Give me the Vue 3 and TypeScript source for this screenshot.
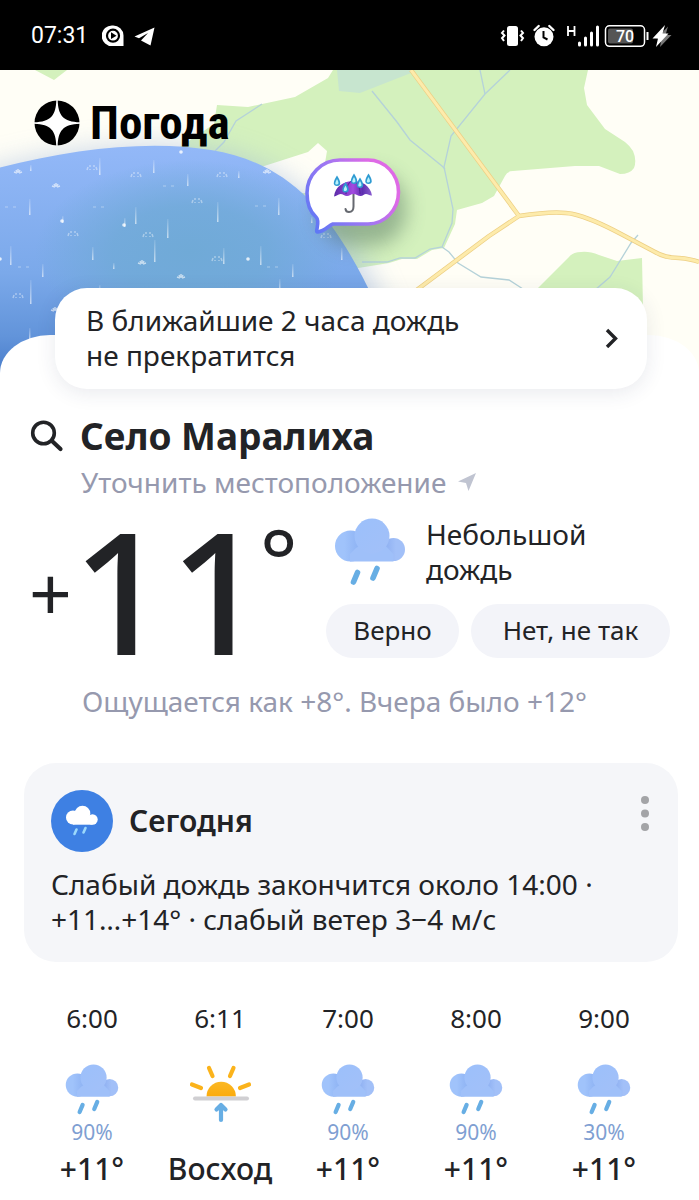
<script setup lang="ts">
interface Hour {
  time: string
  kind: 'rain' | 'sunrise'
  chance?: string
  value: string
}

const hours: Hour[] = [
  { time: '6:00', kind: 'rain', chance: '90%', value: '+11°' },
  { time: '6:11', kind: 'sunrise', value: 'Восход' },
  { time: '7:00', kind: 'rain', chance: '90%', value: '+11°' },
  { time: '8:00', kind: 'rain', chance: '90%', value: '+11°' },
  { time: '9:00', kind: 'rain', chance: '30%', value: '+11°' },
]

// Falling drops on the precipitation layer: x, y, length
const streaks: [number, number, number][] = [
  [30, 95, 6], [99, 88, 17], [153, 90, 13], [187, 104, 12], [238, 101, 7], [29, 129, 16],
  [135, 137, 17], [217, 132, 20], [278, 128, 17], [62, 146, 7], [124, 148, 9], [167, 149, 19],
  [10, 176, 19], [92, 177, 13], [154, 170, 22], [223, 178, 16], [260, 176, 19], [341, 178, 12],
  [42, 194, 13], [113, 193, 6], [292, 194, 13], [30, 210, 24], [279, 209, 12], [99, 215, 8],
  [29, 258, 12], [311, 147, 6],
]
// Splash rings: x, y
const rings: [number, number][] = [
  [92, 97], [136, 104], [222, 104], [197, 130], [73, 163], [148, 164], [217, 188], [18, 225], [326, 165],
]
// Bright splashes: x, y
const stars: [number, number][] = [
  [18, 102], [56, 116], [267, 102], [142, 193], [181, 207], [55, 240],
]
// Points where a drop has just landed: x, y
const dots: [number, number][] = [
  [181, 82], [248, 189], [0, 189], [62, 151], [124, 155],
]
// Fading splashes: x, y
const faint: [number, number][] = [
  [168, 116], [10, 137], [98, 137], [260, 136], [23, 197], [272, 197],
]
// Raindrops over the umbrella: x, y
const drops: [number, number][] = [
  [337, 111], [354, 109], [345.5, 117.5], [360, 113], [368.5, 109],
]
</script>

<template>
  <div class="page">
    <svg class="defs" width="0" height="0" aria-hidden="true">
      <defs>
        <linearGradient id="cloudFill" x1="0" y1="0" x2="1" y2="1">
          <stop offset="0" stop-color="#9cc0fb" />
          <stop offset="1" stop-color="#a2c0f8" />
        </linearGradient>
        <linearGradient id="cloudLeft" x1="0" y1="0" x2="1" y2="0">
          <stop offset="0.3" stop-color="#a0c3fb" />
          <stop offset="1" stop-color="#86abf0" />
        </linearGradient>
        <linearGradient id="cloudRight" x1="0" y1="0" x2="1" y2="0">
          <stop offset="0" stop-color="#88abf0" />
          <stop offset="0.6" stop-color="#a2c0f8" />
        </linearGradient>
        <linearGradient id="sunFill" x1="0" y1="0" x2="0" y2="1">
          <stop offset="0" stop-color="#fbb824" />
          <stop offset="1" stop-color="#fbab0c" />
        </linearGradient>
        <symbol id="rainCloud" viewBox="0 0 72 68">
          <circle cx="16.500" cy="28" r="15.500" fill="url(#cloudLeft)" />
          <circle cx="59.500" cy="31.500" r="11.500" fill="url(#cloudRight)" />
          <path d="M16 43.500h43.500V36L50 26 38 20 22 30l-6 6z" fill="#9fc0f9" />
          <circle cx="38" cy="18" r="17.500" fill="url(#cloudFill)" />
          <path d="M23.500 54.500l-4 9.500M43 50.500l-4 9.500" stroke="#67aee4" stroke-width="5.600" stroke-linecap="round" />
        </symbol>
      </defs>
    </svg>

    <header class="status">
      <span class="clock">07:31</span>
      <svg class="status-left" width="54" height="24" viewBox="0 0 54 24" aria-hidden="true">
        <path d="M11 1.500A10.300 10.300 0 1 0 11 22h10.500V11.500A10.300 10.300 0 0 0 11 1.500z" fill="#fff" />
        <circle cx="11" cy="11.700" r="6" fill="none" stroke="#000" stroke-width="2.200" />
        <path d="M9 8.300l5.500 3.400L9 15.100z" fill="#000" />
        <path d="M52.500 3.500L32.500 12.500l4.500 1.800 9-5.300-7 7.500 9.500 5z" fill="#fff" />
      </svg>
      <svg class="status-right" width="172" height="30" viewBox="0 0 172 30" aria-hidden="true">
        <rect x="7" y="5" width="11" height="20" rx="2.500" fill="#fff" />
        <path d="M4 9.500L2 12l2.500 2.500-2.500 2.700 2 2.800M21 9.500l2 2.500-2.500 2.500 2.500 2.700-2 2.800" fill="none" stroke="#fff" stroke-width="2" />
        <circle cx="44" cy="15.800" r="9.500" fill="#fff" />
        <path d="M34.500 9l4.200-4M53.500 9l-4.200-4" stroke="#fff" stroke-width="2.400" stroke-linecap="round" />
        <path d="M43.500 10v6.500l4 2" fill="none" stroke="#000" stroke-width="2" />
        <path d="M68 5v10M74.500 5v10M68 10h6.500" stroke="#fff" stroke-width="1.800" />
        <path d="M79.500 22v2M85.500 17v7M91.500 12v12M97.500 6v18" stroke="#fff" stroke-width="3" stroke-linecap="round" />
        <rect x="105.500" y="4.800" width="39" height="20.500" rx="4" fill="none" stroke="#fff" stroke-width="1.500" />
        <rect x="108" y="7.500" width="25" height="15" rx="2" fill="#555" />
        <path d="M147.500 11v8" stroke="#fff" stroke-width="2" />
        <text x="125" y="20.500" class="battery">70</text>
        <path d="M168 5.500l-11.500 12h5L160 26l11.500-12h-6z" fill="#777" />
        <path d="M165 4l-12.500 13.500h5.500L156 26l12.500-13.500h-6z" fill="#fff" />
      </svg>
    </header>

    <section class="hero" aria-label="Карта осадков">
      <svg class="map" viewBox="0 0 699 320" preserveAspectRatio="xMinYMin slice" aria-hidden="true">
        <defs>
          <linearGradient id="rainFill" x1="0" y1="0" x2="0" y2="1">
            <stop offset="0" stop-color="#93b8f8" />
            <stop offset="0.5" stop-color="#7ba9ea" />
            <stop offset="0.75" stop-color="#6294da" />
            <stop offset="0.92" stop-color="#4478c8" />
          </linearGradient>
          <radialGradient id="rainCore">
            <stop offset="0" stop-color="#70aad7" />
            <stop offset="0.5" stop-color="#70aad7" stop-opacity="0.8" />
            <stop offset="1" stop-color="#70aad7" stop-opacity="0" />
          </radialGradient>
          <linearGradient id="bubbleStroke" x1="0" y1="0.800" x2="1" y2="0.250">
            <stop offset="0" stop-color="#5f78f5" />
            <stop offset="0.5" stop-color="#a276f2" />
            <stop offset="0.850" stop-color="#de6ae6" />
          </linearGradient>
          <linearGradient id="umbrella" x1="0" y1="0" x2="1" y2="0">
            <stop offset="0" stop-color="#5b2ba8" />
            <stop offset="0.5" stop-color="#a34ae0" />
            <stop offset="0.750" stop-color="#5d2fb0" />
            <stop offset="1" stop-color="#8b5ed0" />
          </linearGradient>
          <linearGradient id="streak" x1="0" y1="0" x2="0" y2="1">
            <stop offset="0" stop-color="#fff" stop-opacity="0.1" />
            <stop offset="1" stop-color="#fff" stop-opacity="0.6" />
          </linearGradient>
          <filter id="haze" x="-20%" y="-30%" width="140%" height="160%"><feGaussianBlur stdDeviation="14" /></filter>
          <filter id="soft" x="-50%" y="-50%" width="200%" height="200%"><feGaussianBlur stdDeviation="10" /></filter>
        </defs>

        <rect width="699" height="320" fill="#fffef6" />
        <g fill="#d4f1bd">
          <path d="M35 0h32L54 10z" />
          <path d="M333 0l-5 8-33 19-47 10-31-2-3 19-34 23v60l160 64 49-8 13-4 15 0 15-9 12-2 11-24 2-14 25-7 12-7 11-20q2-5 8-5l62-5 24 0 21 8q10 0 14-6 3-8-1-17-4-6-8-9l-20-13-18-24-3-17 4-18z" />
          <path d="M535 221l34-34q4-5 12-5 8-1 18 3l18 6 25-3 1 50H535z" />
        </g>
        <path d="M258 98l50-16 10-9 9 8-2 12-8 30-30 0z" fill="#fffef6" />
        <path d="M337 0l2 21 21 2 51-20V0z" fill="#c7e5cf" />
        <g fill="none" stroke="#b5d2d9" stroke-width="1.300">
          <path d="M262 34l-26 17-12 21-9 9" />
          <path d="M372 21l25 31 13 18 32 26 3 3" />
          <path d="M510 0l-25 24-34 42-7 31 9 42-1 14-10 24-12 2-15 9-15 0-13 4H362" />
          <path d="M480 0l5 24" />
          <path d="M442 177l7 5 9 11 23 14 28 3 14 9" />
          <path d="M638 165l-7 8-21 34-15 13" />
        </g>
        <g fill="none" stroke-linejoin="round">
          <path d="M411 0l108 146M414 222l75-56 30-20q38-6 54-2 18 4 48 20l34 18q10 6 24 6 12 1 20 4" stroke="#edcf84" stroke-width="4.500" />
          <path d="M411 0l108 146M414 222l75-56 30-20q38-6 54-2 18 4 48 20l34 18q10 6 24 6 12 1 20 4" stroke="#fdebab" stroke-width="3" />
        </g>

        <path d="M-20 103C60 80 145 69 211 80 320 102 370 190 395 270V330H-20z" fill="#9db5dc" opacity="0.55" filter="url(#haze)" />
        <path d="M-20 103C60 80 145 69 211 80 310 96 352 173 400 290V330H-20z" fill="url(#rainFill)" />
        <ellipse cx="190" cy="182" rx="155" ry="92" fill="url(#rainCore)" />
        <rect v-for="([x, y, l], i) in streaks" :key="'s' + i" :x="x" :y="y" width="1.500" :height="l" fill="url(#streak)" />
        <path
          v-for="([x, y], i) in rings" :key="'r' + i" class="ring"
          :d="`M${x - 5} ${y + 3}l1-3M${x - 3} ${y - 1}h2M${x + 5} ${y + 3}l-1-3M${x + 3} ${y - 1}h-2M${x - 2} ${y + 2}v1M${x + 2} ${y + 2}v1`"
        />
        <path
          v-for="([x, y], i) in stars" :key="'b' + i" class="star"
          :d="`M${x - 4} ${y}l3 1M${x + 4} ${y}l-3 1M${x} ${y - 3}v4M${x - 2} ${y - 2}l1 2M${x + 2} ${y - 2}l-1 2`"
        />
        <circle v-for="([x, y], i) in dots" :key="'o' + i" class="dot" :cx="x" :cy="y" r="1.800" />
        <path v-for="([x, y], i) in faint" :key="'f' + i" class="faint" :d="`M${x - 5} ${y}h3M${x + 3} ${y}h3`" />

        <rect x="318" y="102" width="88" height="74" rx="34" fill="#486b58" opacity="0.45" filter="url(#soft)" />
        <path d="M340 90H368A30.500 32 0 0 1 368 154H333C328 156 325 161 318 162 314 163 321 152 316 147 308 140 307 131 307 123A33 33 0 0 1 340 90Z" fill="#fff" stroke="url(#bubbleStroke)" stroke-width="3.600" />
        <path d="M353.500 120v16.500q0 5.500-4.500 5.500-3 0-3.500-3" fill="none" stroke="#666970" stroke-width="2" stroke-linecap="round" />
        <path d="M334 126.500c2-20 35-21 38-1-2 .5-4-1.500-6-1.500s-3 2-5.500 2-4.500-2-7-2-4 2-6.500 2-4-2-6.500-2-4 2.500-6.500 2.500z" fill="url(#umbrella)" />
        <path d="M346 124c0-6 2-11 6-13.500M360 124c0-6-2-11-6-13.500" fill="none" stroke="#4a2393" stroke-width="1" />
        <g v-for="([x, y], i) in drops" :key="'d' + i">
          <path :d="`M${x} ${y - 5.5}q-6.500 10 0 10.500q6.500-.5 0-10.500z`" fill="#2f9bd2" />
          <path :d="`M${x} ${y - 2}q-3.500 6 0 5.500q3-.5 0-5.500z`" fill="#b9f2fb" />
        </g>
      </svg>
      <div class="brand">
        <svg width="46" height="46" viewBox="0 0 46 46" aria-hidden="true">
          <circle cx="23" cy="23" r="22.500" fill="#000" />
          <path d="M22.300 0h1.400C24 15 29 22 46 22.300v1.400C29 24 24 31 23.700 46h-1.400C22 31 17 24 0 23.700v-1.400C17 22 22 15 22.300 0z" fill="#fff" />
        </svg>
        <span class="brand-name">Погода</span>
      </div>
    </section>

    <main class="sheet">
      <a class="alert" href="#nowcast">
        <span>В ближайшие 2 часа дождь<br />не прекратится</span>
        <svg width="14" height="20" viewBox="0 0 14 20" aria-hidden="true">
          <path d="M2 2l8.500 8.500L2 19" fill="none" stroke="#222326" stroke-width="3.400" />
        </svg>
      </a>

      <div class="place">
        <button class="icon-button" type="button" aria-label="Поиск">
          <svg width="34" height="34" viewBox="0 0 34 34" aria-hidden="true">
            <circle cx="13.500" cy="14" r="10.800" fill="none" stroke="#222326" stroke-width="3.600" />
            <path d="M22 22l8.500 8" stroke="#222326" stroke-width="4.200" stroke-linecap="round" />
          </svg>
        </button>
        <h1>Село Маралиха</h1>
      </div>
      <button class="locate" type="button">
        <span>Уточнить местоположение</span>
        <svg width="18" height="18" viewBox="0 0 18 18" aria-hidden="true">
          <path d="M18 0L0 8.500l8 1.500 2.500 8z" fill="#c0c4d1" />
        </svg>
      </button>

      <section class="now">
        <div class="temp">
          <span class="sign">+</span><span class="digits">11</span><span class="degree">°</span>
        </div>
        <div class="details">
          <div class="condition">
            <svg width="72" height="68" aria-hidden="true"><use href="#rainCloud" /></svg>
            <p>Небольшой<br />дождь</p>
          </div>
          <div class="answers">
            <button class="pill yes" type="button">Верно</button>
            <button class="pill no" type="button">Нет, не так</button>
          </div>
        </div>
      </section>
      <p class="feels">Ощущается как +8°. Вчера было +12°</p>

      <section class="today">
        <div class="today-head">
          <svg width="62" height="62" viewBox="0 0 62 62" aria-hidden="true">
            <circle cx="31" cy="31" r="31" fill="#3e80e3" />
            <g fill="#fff">
              <circle cx="22" cy="27.500" r="7" />
              <circle cx="31.500" cy="23.500" r="7.800" />
              <circle cx="41.500" cy="29.500" r="5.200" />
              <path d="M22 26h19.500v8.700H22z" />
            </g>
            <path d="M25.500 39.500l-2 4.500M34.500 38l-2 4.500" stroke="#9bd8fb" stroke-width="2.600" stroke-linecap="round" />
          </svg>
          <h2>Сегодня</h2>
          <button class="icon-button menu" type="button" aria-label="Ещё">
            <svg width="10" height="38" viewBox="0 0 10 38" aria-hidden="true">
              <g fill="#a3a4a7"><circle cx="5" cy="5" r="4" /><circle cx="5" cy="18.500" r="4" /><circle cx="5" cy="32" r="4" /></g>
            </svg>
          </button>
        </div>
        <p>Слабый дождь закончится около 14:00 ·<br />+11…+14° · слабый ветер 3−4 м/с</p>
      </section>

      <ul class="hours">
        <li v-for="hour in hours" :key="hour.time">
          <time>{{ hour.time }}</time>
          <svg v-if="hour.kind === 'rain'" class="rain" width="54" height="51" aria-hidden="true">
            <use href="#rainCloud" />
          </svg>
          <svg v-else class="sunrise" width="64" height="60" viewBox="0 0 64 60" aria-hidden="true">
            <path d="M18.500 33.500a14.700 14.700 0 0 1 29.400 0z" fill="url(#sunFill)" />
            <path d="M21 5l3.500 8M45.500 5L42 13M4 21.500l9 3.500M61 21.500L52 25" stroke="#fbb31b" stroke-width="4.200" stroke-linecap="round" />
            <path d="M7 35.500h52" stroke="#d0cfd2" stroke-width="4" stroke-linecap="round" />
            <path d="M33 42V57M28.500 46.500L33 42l4.500 4.500" fill="none" stroke="#67aee4" stroke-width="4.200" stroke-linecap="round" stroke-linejoin="round" />
          </svg>
          <span v-if="hour.chance" class="chance">{{ hour.chance }}</span>
          <strong>{{ hour.value }}</strong>
        </li>
      </ul>
    </main>
  </div>
</template>

<style>
body {
  margin: 0;
  background: #fff;
}
</style>

<style scoped>
.page {
  font-family: "Noto Sans", "Open Sans", sans-serif;
  font-size: 28px;
  line-height: 35px;
  color: #222326;
  background: #fff;
}
.defs {
  display: block;
}
h1, h2, p, ul {
  margin: 0;
  padding: 0;
}
button {
  font: inherit;
  color: inherit;
  border: 0;
  padding: 0;
  background: none;
  cursor: pointer;
}
svg {
  flex: none;
}
.status {
  display: flex;
  align-items: center;
  box-sizing: border-box;
  height: 70px;
  padding: 2px 27px 0 31px;
  background: #000;
}
.clock {
  font: 23px/24px Roboto, sans-serif;
  color: #fff;
}
.status-left {
  margin-left: 14px;
}
.status-right {
  margin-left: auto;
}
.battery {
  font: 500 16px Roboto, sans-serif;
  fill: #fff;
  text-anchor: middle;
}
.hero {
  position: relative;
  height: 320px;
  overflow: hidden;
}
.map {
  display: block;
  width: 100%;
  height: 100%;
}
.ring {
  fill: none;
  stroke: #fff;
  stroke-opacity: 0.4;
  stroke-width: 1.5;
}
.star {
  fill: none;
  stroke: #fff;
  stroke-width: 1.5;
  stroke-opacity: 0.6;
}
.dot {
  fill: #fff;
  opacity: 0.8;
}
.faint {
  stroke: #fff;
  stroke-opacity: 0.25;
  stroke-width: 1.5;
}
.brand {
  position: absolute;
  left: 34px;
  top: 30px;
  display: flex;
  align-items: center;
  gap: 10px;
  color: #000;
}
.brand-name {
  font: bold 47px/46px "Roboto Condensed", "Liberation Sans Narrow", Roboto, sans-serif;
}
.sheet {
  position: relative;
  margin-top: -55px;
  padding-bottom: 12px;
  border-radius: 50px 50px 0 0 / 38px 38px 0 0;
  background: #fff;
  display: flow-root;
}
.alert {
  display: flex;
  align-items: center;
  justify-content: space-between;
  margin: -47px 52px 0 55px;
  padding: 15px 28px 16px 31px;
  border-radius: 32px;
  background: #fff;
  box-shadow: 0 4px 20px rgba(40, 50, 90, 0.1);
  color: inherit;
  text-decoration: none;
}
.place {
  display: flex;
  align-items: center;
  gap: 16px;
  margin: 25px 30px 0;
}
.icon-button {
  display: flex;
}
h1 {
  font-size: 37px;
  line-height: 44px;
  font-weight: 700;
}
.locate {
  display: flex;
  align-items: center;
  gap: 12px;
  margin: 6px 0 0 81px;
  line-height: 36px;
  color: #9699ae;
}
.now {
  display: flex;
  justify-content: space-between;
  margin: 17px 29px 0;
}
.temp {
  display: flex;
  align-items: flex-start;
}
.sign {
  margin-top: 38px;
  font-size: 75px;
  line-height: 75px;
}
.digits {
  font-size: 170px;
  line-height: 144px;
  font-weight: 500;
}
.degree {
  margin-left: -7px;
  font-size: 90px;
  line-height: 84px;
}
.condition {
  display: flex;
  align-items: center;
  gap: 20px;
  height: 70px;
  padding-left: 8px;
}
.answers {
  display: flex;
  gap: 12px;
  margin-top: 17px;
}
.pill {
  height: 54px;
  padding-bottom: 2px;
  border-radius: 27px;
  background: #f3f4f9;
  font-size: 26px;
}
.yes {
  width: 133px;
}
.no {
  width: 199px;
}
.feels {
  margin: 22px 0 0 82px;
  line-height: 36px;
  color: #9699ae;
}
.today {
  margin: 44px 21px 0 24px;
  padding: 27px 27px 25px;
  border-radius: 32px;
  background: #f5f6f9;
}
.today-head {
  display: flex;
  align-items: center;
  gap: 16px;
  margin-bottom: 15px;
}
h2 {
  font-size: 30px;
  line-height: 36px;
  font-weight: 600;
}
.menu {
  margin: 0 1px 14px auto;
}
.hours {
  display: grid;
  grid-template-columns: repeat(5, 1fr);
  margin: 40px 31px 0 28px;
  list-style: none;
}
.hours li {
  display: flex;
  flex-direction: column;
  align-items: center;
}
.hours time {
  font-size: 26px;
  line-height: 32px;
}
.rain {
  margin: 30px 0 4px;
}
.sunrise {
  margin-top: 29px;
}
.chance {
  font-size: 21px;
  line-height: 26px;
  color: #7f9fd2;
}
.hours strong {
  margin-top: auto;
  padding-top: 6px;
  font-size: 30px;
  line-height: 36px;
  font-weight: 500;
}
</style>
